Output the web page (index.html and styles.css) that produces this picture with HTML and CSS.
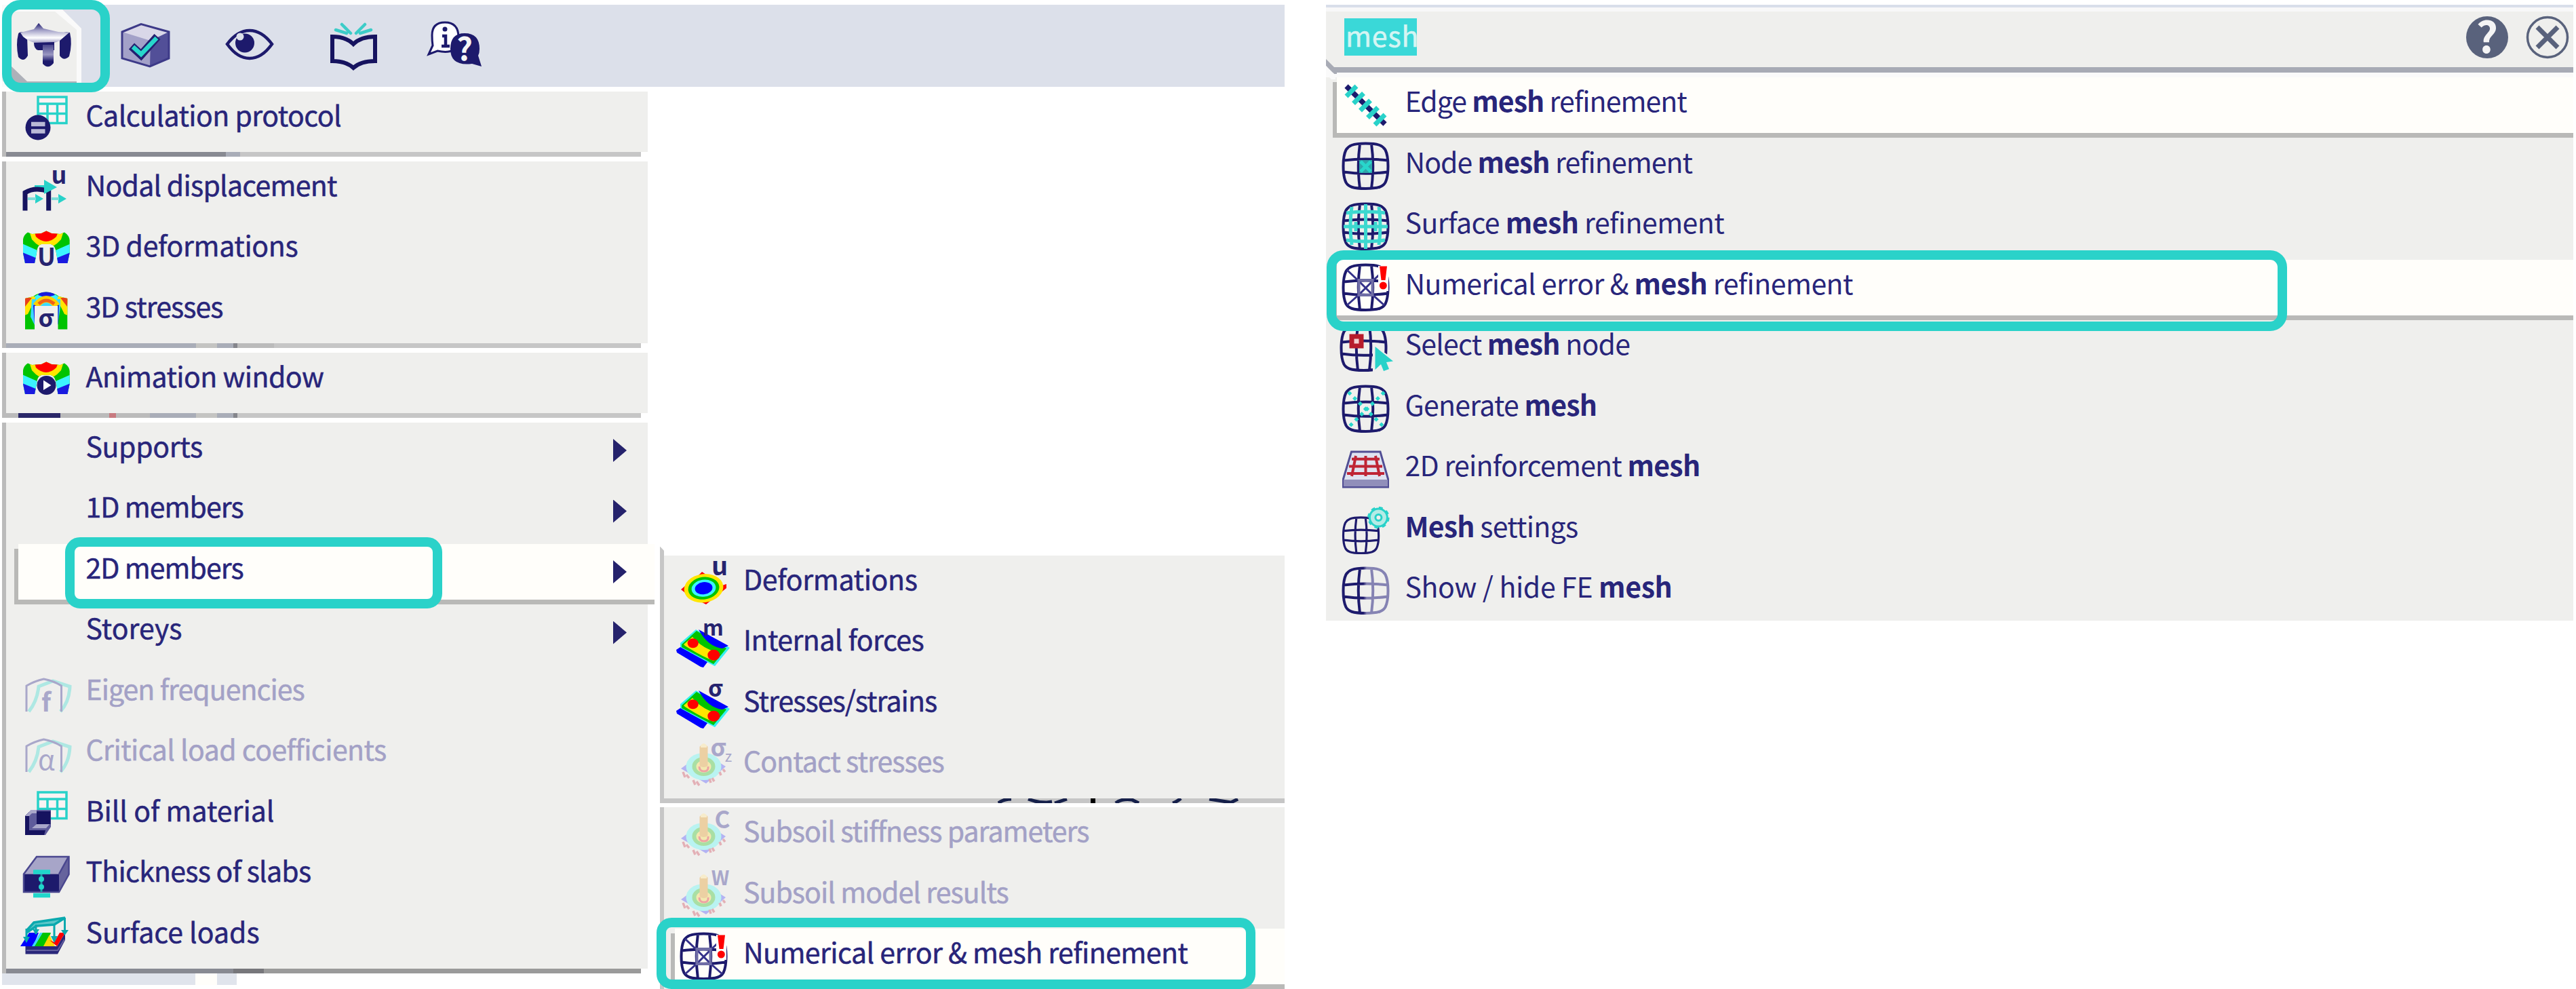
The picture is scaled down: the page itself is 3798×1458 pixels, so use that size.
FILE: index.html
```html
<!DOCTYPE html>
<html lang="en">
<head>
<meta charset="utf-8">
<title>Results menu and mesh search</title>
<link rel="stylesheet" href="styles.css">
</head>
<body>
<svg class="defs" width="0" height="0" aria-hidden="true">
  <defs>
    <linearGradient id="roof" x1="0" y1="0" x2="0" y2="1"><stop offset="0" stop-color="#1d1a6c"/><stop offset=".35" stop-color="#a5a3c9"/><stop offset=".7" stop-color="#fff"/><stop offset="1" stop-color="#8482b4"/></linearGradient>
    <linearGradient id="leg" x1="0" y1="0" x2="0" y2="1"><stop offset="0" stop-color="#4a478c"/><stop offset=".45" stop-color="#9a98c2"/><stop offset=".75" stop-color="#1d1a6c"/></linearGradient>
    <linearGradient id="fade" gradientUnits="userSpaceOnUse" x1="8" y1="0" x2="77" y2="0"><stop offset="0" stop-color="#1d1a6c"/><stop offset=".45" stop-color="#1d1a6c"/><stop offset=".52" stop-color="#8583b3"/><stop offset="1" stop-color="#8583b3"/></linearGradient>
    <clipPath id="arch"><path d="M12 61L9 46V26Q10 19 16 15.500L22 18L36 17L43.300 13.500L51 17L64 18L70 15.500Q77 20 77.700 27V46L74.500 61H60.500L58 46Q56 34 50 33H36Q30 34 29 46L26 61Z"/></clipPath>
    <clipPath id="arch2"><path d="M12 68.500V23L24 20Q32 14 43 13.500Q54 14 62 20L74.300 23V68.500H60.500V34H26V68.500Z"/></clipPath>
    <symbol id="globe" viewBox="0 0 90 89.5" overflow="visible">
      <path d="M42.500 7.500C62 7.500 68 11 71.500 17C74.500 23 75.500 31 75.500 41C75.500 51 74.500 59 71.500 65C68 71 62 74 42.500 74C23 74 17 71 13.500 65C10.500 59 9.500 51 9.500 41C9.500 31 10.500 23 13.500 17C17 11 23 7.500 42.500 7.500ZM34 8Q29.500 40 34 74M51 8Q55.500 40 51 74M10 32.500Q42.500 28.500 75 32.500M10 49.500Q42.500 54 75 49.500" fill="none" stroke="currentColor" stroke-width="4"/>
    </symbol>
    <symbol id="table" viewBox="0 0 90 89.5" overflow="visible">
      <path d="M31 8H73V46.500H31ZM31 18H73M31 32.500H73M45 18V46M59.500 18V46" fill="#faf3f3" stroke="#28d2c9" stroke-width="3.500"/>
    </symbol>
    <symbol id="deform" viewBox="0 0 90 89.5" overflow="visible">
      <g clip-path="url(#arch)"><path d="M5 5H82V70H5Z" fill="#00c400"/><path d="M5 31L30 42V70H5ZM82 31L57 42V70H82Z" fill="#3cf4ff"/><path d="M5 44L30 54V70H5ZM82 44L57 54V70H82Z" fill="#1a1ae0"/><path d="M17 10L22 26Q27 32 34 36H53Q60 32 65 26L70 10Z" fill="#ffe600"/><path d="M25 12L28 22Q43 36 58 22L62 12Z" fill="#f00"/></g>
    </symbol>
    <symbol id="plate" viewBox="0 0 90 89.5" overflow="visible">
      <path d="M8 40L31 20L81 47L59 74L8 48Z" fill="#35f0f0"/><path d="M10 42L32 22L76 48L57 71L10 46Z" fill="#00c400"/><path d="M13 42L26 31Q40 48 66 55L57 66Q40 60 15 44Z" fill="#ffe600"/>
      <path d="M35 20L79 44L70 48Q48 45 35 20Z" fill="#00f"/><path d="M2 50L8 46L48 68L42 76L38 75L3 54Z" fill="#00f"/>
      <ellipse cx="26.700" cy="40.300" rx="8" ry="7" fill="#f00"/><ellipse cx="57.300" cy="57.700" rx="9" ry="8" fill="#f00"/>
    </symbol>
    <symbol id="soil" viewBox="0 0 90 89.5" overflow="visible">
      <path d="M9 46L42 22L75 43L46 68Z" fill="#b3b3f3"/><ellipse cx="42.500" cy="43" rx="26" ry="20" fill="#b9f3f1"/><ellipse cx="42.500" cy="43" rx="17" ry="14" fill="#a9dfa4"/><ellipse cx="42.500" cy="43" rx="11" ry="9" fill="#f3e8b0"/>
      <path d="M36 43Q36 50 43 50Q50 50 49 43" fill="none" stroke="#eda3a3" stroke-width="3"/><path d="M36.500 14Q42.500 6 48.500 14V42Q42.500 46 36.500 42Z" fill="#ecd0a3"/><path d="M38 12Q42.500 6 47 12V15H38Z" fill="#f7eccb"/>
      <path d="M12 51L15 59M17 55L21 60M27 63L30 70M32 65L36 71M53 67L51 61M58 65L55 60M68 56L66 51M74 51L71 47" stroke="#e3b0b6" stroke-width="3.500"/>
    </symbol>
    <symbol id="frame" viewBox="0 0 90 89.5" overflow="visible">
      <path d="M17.500 68Q30 52 32 31L53 23L78 31Q77 54 64 68" fill="none" stroke="#aee8e3" stroke-width="5"/><path d="M14 68V30Q26 23 39.500 20Q55 23 65.500 30V68" fill="none" stroke="#a9a7ca" stroke-width="3"/>
    </symbol>
    <symbol id="error" viewBox="0 0 90 89.5" overflow="visible">
      <use href="#globe"/><path d="M15 15L33 32L52 51L70 67M70 15L52 32L33 51L15 67" stroke="#34318a" stroke-width="3" fill="none"/><path d="M32.500 30H52.500V52H32.500Z" fill="none" stroke="#6f6da5" stroke-width="4"/>
      <path d="M61 9H76V46H61Z" fill="#fffefa"/><path d="M63 9.500H74L71.500 30H65.500Z" fill="#f00"/><circle cx="68.300" cy="38" r="5.500" fill="#f00"/>
    </symbol>
  </defs>
</svg>

<main class="page">
  <section class="app">
    <header class="toolbar">
      <svg class="tool" width="160" height="121" viewBox="3 7 160 121"><path d="M3 7H85L120 42V128H3Z" fill="#fafafa"/><path d="M3 17H81L113 44V120H3Z" fill="#efefed"/><path d="M17 98L40 120H113V123H17Z" fill="#aeb1b9"/>
        <path d="M27 50Q28 46 38 48L40 54L41 82Q35 93 27 84Q23 65 27 50ZM103 48Q92 46 88 53V82Q94 91 102 83Q107 65 103 48Z" fill="#1d1a6c"/><path d="M30 48L50 43L57 34L64 42L86 47L102 48L88 60Q76 66 60 65Q44 63 34 54Z" fill="url(#roof)"/><path d="M50 63L80 62V74H56Q50 72 50 63Z" fill="#1d1a6c"/><path d="M63 66H79V93Q71 103 63 94Z" fill="url(#leg)"/></svg>
      <svg class="tool" width="125" height="121" viewBox="163 7 125 121"><path d="M180 47L208 36L249 47V86L221 98L180 86Z" fill="#a3a1c8"/><path d="M180 47L208 36L249 47L222 60Z" fill="#d9d7e8"/><path d="M222 60L249 47V86L221 98Z" fill="#524f98"/><path d="M180 47L208 35.500L249 47V86L221 98L180 86Z" fill="none" stroke="#3d3a88" stroke-width="3"/><path d="M194 68L208 81L232 54" fill="none" stroke="#232070" stroke-width="12"/><path d="M196 69L208 80L231 56" fill="none" stroke="#28d6cb" stroke-width="6.500"/></svg>
      <svg class="tool" width="155" height="121" viewBox="288 7 155 121"><path d="M335 65Q350 45 368 45Q386 45 401 65Q386 86 368 86Q350 86 335 65Z" fill="none" stroke="#1d1a6c" stroke-width="4.500"/><circle cx="361" cy="63.500" r="14" fill="#1d1a6c"/><circle cx="354" cy="54" r="5.500" fill="#dce0ea"/></svg>
      <svg class="tool" width="155" height="121" viewBox="443 7 155 121"><path d="M490 54Q510 54 521 65Q532 54 553 54V90Q532 90 521 100Q510 90 490 90Z" fill="none" stroke="#16135f" stroke-width="6"/><path d="M495 44L511 49M504 36L517 49M547 44L531 49M538 36L525 49" stroke="#3cccc8" stroke-width="4.500" stroke-linecap="round"/></svg>
      <svg class="tool" width="155" height="121" viewBox="598 7 155 121"><path d="M638 67L632 80L645 75Q676 82 676 55Q676 33 656 33Q637 33 637 52Q637 61 638 67Z" fill="#fff" stroke="#1d1a6c" stroke-width="3"/><path d="M652 53H657V68M651 68H663" stroke="#1d1a6c" stroke-width="4.500" fill="none"/><circle cx="656" cy="43" r="3.500" fill="#1d1a6c"/><path d="M705 82L710 98L696 94Q664 98 664 72Q664 49 685 49Q707 49 707 72Q707 78 705 82Z" fill="#1d1a6c"/><text class="glyph" x="685" y="89" font-size="46" fill="#fff">?</text></svg>
    </header>

    <div class="menus">
      <nav class="menu results">
        <div class="group">
          <div class="row"><svg class="icon" viewBox="0 0 90 89.5"><use href="#table"/><circle cx="31" cy="53" r="18.500" fill="#1d1a6c"/><path d="M21 48H41.500M21 58.500H41.500" stroke="#babad6" stroke-width="6.500"/></svg><span class="snug">Calculation protocol</span></div>
        </div>
        <div class="group">
          <div class="row"><svg class="icon" viewBox="0 0 90 89.5"><path d="M26 38H42" stroke="#28d2c9" stroke-width="6"/><path d="M12 72.500V46Q26 37 46.700 44V72.500" fill="none" stroke="#16135f" stroke-width="7"/><path d="M40 27L59 38L40 48ZM27 48L39 55L27 62ZM61 48L73 55L61 62Z" fill="#28d2c9"/><path d="M16 55H28M51 55H62" stroke="#7fdcd8" stroke-width="4"/><text class="glyph" x="62" y="32.500" font-size="36">u</text></svg><span class="tight">Nodal displacement</span></div>
          <div class="row"><svg class="icon" viewBox="0 0 90 89.5"><use href="#deform"/><text class="glyph" x="43.500" y="64.500" font-size="36">U</text></svg><span class="close">3D deformations</span></div>
          <div class="row"><svg class="icon" viewBox="0 0 90 89.5"><g clip-path="url(#arch2)"><path d="M5 5H82V75H5Z" fill="#00c400"/><path d="M11 20H29L16 46L11 48ZM75 20H57L70 46L75 48Z" fill="#ffe600"/><path d="M10 22H22L12 35ZM76 22H64L74 35Z" fill="#e8401a"/><path d="M22 24H64V36L60 62L56 36H30L26 62L20 50Z" fill="#3cd8ff"/><path d="M24 33L29 31V56L26 62ZM62 33L58 31V56L61 62Z" fill="#1a1ae0"/><path d="M26 20Q43 8 61 20L57 30H30Z" fill="#3cf4ff"/><path d="M31 18L35 12H52L56 18L49 20H37Z" fill="#1a1ae0"/><path d="M28 34Q43 14 59 34" fill="none" stroke="#ffd000" stroke-width="10"/><path d="M32 31Q43 21 55 31" fill="none" stroke="#f06018" stroke-width="5"/></g><text class="glyph" x="43" y="65" font-size="36">σ</text></svg><span class="tightest">3D stresses</span></div>
        </div>
        <div class="group">
          <div class="row"><svg class="icon" viewBox="0 0 90 89.5"><use href="#deform"/><circle cx="43.500" cy="48" r="14" fill="#1d1a6c"/><path d="M39 40.500L50.500 48L39 55Z" fill="#fff"/></svg><span class="snug">Animation window</span></div>
        </div>
        <div class="group">
          <div class="row"><i class="icon"></i><span class="close">Supports</span><i class="arrow"></i></div>
          <div class="row"><i class="icon"></i><span class="tightest">1D members</span><i class="arrow"></i></div>
          <div class="row active"><i class="icon"></i><span class="tightest">2D members</span><i class="arrow"></i></div>
          <div class="row"><i class="icon"></i><span>Storeys</span><i class="arrow"></i></div>
          <div class="row disabled"><svg class="icon" viewBox="0 0 90 89.5"><use href="#frame"/><text class="glyph" x="43" y="68" font-size="38">f</text></svg><span class="tightest">Eigen frequencies</span></div>
          <div class="row disabled"><svg class="icon" viewBox="0 0 90 89.5"><use href="#frame"/><text class="glyph thin" x="43.500" y="64.500" font-size="40">α</text></svg><span class="snug">Critical load coefficients</span></div>
          <div class="row"><svg class="icon" viewBox="0 0 90 89.5"><use href="#table"/><path d="M12 43L21 34H50V59L42 71H12Z" fill="#5e5b9b"/><path d="M12 43L18 37V64H42L40 71H12Z" fill="#16135f"/><path d="M12 43L21 34H29V39H22L18 43Z" fill="#a9a7ca"/><path d="M22 61L30 54H49L43 61Z" fill="#a9a7ca"/><path d="M29 36H49.500V55H29Z" fill="#16135f"/></svg><span>Bill of material</span></div>
          <div class="row"><svg class="icon" viewBox="0 0 90 89.5"><path d="M10 39.500L29 14H76L62 39.500Z" fill="#a7a5c8"/><path d="M62 39.500L76 14V40L62 66Z" fill="#66639d"/><path d="M10 39.500H62V66H10Z" fill="#1d1a6c"/><path d="M10 39.500L29 14H76.500V40L62 66H10ZM62 39.500L76 14" fill="none" stroke="#4a478f" stroke-width="2.500"/><path d="M24 36.500H49M24 71H49" stroke="#20d6cb" stroke-width="6.500"/><path d="M36 40V66" stroke="#1e9ba8" stroke-width="3"/><circle cx="36" cy="47" r="4" fill="#20d6cb"/><circle cx="36" cy="58.500" r="4" fill="#20d6cb"/></svg><span class="tight">Thickness of slabs</span></div>
          <div class="row"><svg class="icon" viewBox="0 0 90 89.5"><path d="M12.500 56H59L71 36V47L60 67.500H12.500Z" fill="#2a277a"/><path d="M14 62H60L70 46" fill="none" stroke="#625f9f" stroke-width="2"/><path d="M5 56L18 36H32L24 56Z" fill="#00f"/><path d="M22 56L34 36H40L28 56Z" fill="#3cd8ff"/><path d="M26 56L38 36H50L42 56Z" fill="#00c400"/><path d="M39 56L48 39L56 56Z" fill="#ffd800"/><path d="M48 47L59 56L71 36H63L55 50Z" fill="#f00"/><path d="M14 33L25 21L71 14L55 24L29 26L14 36" fill="#5cc7c9" stroke="#0aa9ae" stroke-width="3.500"/><path d="M14 30V48M28 24V38M55 24V47M70.500 14V36" stroke="#0aa9ae" stroke-width="3"/><path d="M9 42H19L14 51ZM50 41H60L55 51ZM65 32H76L70.500 40ZM23 31H33L28 39Z" fill="#0aa9ae"/></svg><span>Surface loads</span></div>
        </div>
        <div class="residue"><i></i><i></i><i></i></div>
      </nav>

      <nav class="menu submenu">
        <div class="group first">
          <div class="row"><svg class="icon" viewBox="0 0 90 89.5"><path d="M9 50L16 44L34 30L40 24L46 28L70 44L76 42V48L56 64L46 72L38 68L14 54Z" fill="#f00"/><g transform="rotate(-8 42.500 48)"><ellipse cx="42.500" cy="48.200" rx="29" ry="21" fill="#ffe600"/><ellipse cx="42.500" cy="48.200" rx="23" ry="16.500" fill="#00c400"/><ellipse cx="42.500" cy="48.200" rx="18" ry="12.500" fill="#3cf4ff"/><ellipse cx="42.500" cy="48.200" rx="13" ry="9" fill="#00f"/></g><text class="glyph" x="66" y="29" font-size="38">u</text></svg><span class="close">Deformations</span></div>
          <div class="row"><svg class="icon" viewBox="0 0 90 89.5"><use href="#plate"/><text class="glyph" x="56.500" y="28.500" font-size="32">m</text></svg><span class="snug">Internal forces</span></div>
          <div class="row"><svg class="icon" viewBox="0 0 90 89.5"><use href="#plate"/><text class="glyph" x="60" y="29" font-size="34">σ</text></svg><span class="tightest">Stresses/strains</span></div>
          <div class="row disabled"><svg class="icon" viewBox="0 0 90 89.5"><use href="#soil"/><text class="glyph" x="64" y="28" font-size="36">σ</text><text class="glyph thin" x="79" y="36" font-size="22">z</text></svg><span class="tightest">Contact stresses</span></div>
          <svg class="remnant" width="370" height="7" viewBox="0 0 370 7"><path d="M1 7Q8 1 20 1M174 7Q182 0 198 2L208 7M258 7Q264 5 270 0M45 1Q58 6 72 6L80 5M84 7L102 1M312 1L344 6L354 1" fill="none" stroke="#16204a" stroke-width="5"/><path d="M137 0H144V7H137Z"/></svg>
        </div>
        <div class="group">
          <div class="row disabled"><svg class="icon" viewBox="0 0 90 89.5"><use href="#soil"/><text class="glyph" x="70" y="30.500" font-size="35">C</text></svg><span class="tightest">Subsoil stiffness parameters</span></div>
          <div class="row disabled"><svg class="icon" viewBox="0 0 90 89.5"><use href="#soil"/><text class="glyph" x="67" y="25" font-size="29">W</text></svg><span class="tightest">Subsoil model results</span></div>
          <div class="row active"><svg class="icon" viewBox="0 0 90 89.5"><use href="#error"/></svg><span class="snug">Numerical error &amp; mesh refinement</span></div>
        </div>
      </nav>
    </div>
  </section>

  <section class="search">
    <header class="field">
      <span class="query">mesh</span>
      <svg class="actions" width="170" height="90" viewBox="3624 10 170 90"><circle cx="3667" cy="55" r="31" fill="#59627c"/><text class="glyph" x="3667" y="78" font-size="63" fill="#efefed">?</text><circle cx="3756" cy="55" r="29.500" fill="none" stroke="#59627c" stroke-width="3.500"/><path d="M3741 40L3771 70M3771 40L3741 70" stroke="#59627c" stroke-width="7"/></svg>
      <svg class="corner" width="20" height="36" viewBox="0 0 20 36"><path d="M0 12V2L16 18V24H12Z" fill="#a8abb5"/><path d="M0 12L14 26V32H8L0 24Z" fill="#fafafa"/></svg>
    </header>
    <div class="row active"><svg class="icon" viewBox="0 0 90 89.5"><path d="M14 13L71 69" stroke="#1d1a6c" stroke-width="7.500"/><path d="M14 28L29 13M24.500 38.500L39.500 23.500M34.500 49L49.500 34M45.500 59.500L60.500 44.500M56 70L71 55" stroke="#28d2c9" stroke-width="7"/></svg><span class="tightest">Edge <b>mesh</b> refinement</span></div>
    <div class="row"><svg class="icon" viewBox="0 0 90 89.5"><use href="#globe"/><path d="M33 32H52V51H33Z" fill="#2fa5a9"/><path d="M35 34L50 49M50 34L35 49" stroke="#28d6cb" stroke-width="5"/></svg><span class="tightest">Node <b>mesh</b> refinement</span></div>
    <div class="row"><svg class="icon" viewBox="0 0 90 89.5"><use href="#globe"/><path d="M22 12Q18 40 22 68M42.500 8V74M62 12Q66 40 62 68M14 21Q42.500 17 71 21M10 41H75M14 61Q42.500 65 71 61M28 34V48M57 34V48" fill="none" stroke="#3dd8cf" stroke-width="5"/></svg><span class="snug">Surface <b>mesh</b> refinement</span></div>
    <div class="row active"><svg class="icon" viewBox="0 0 90 89.5"><use href="#error"/></svg><span class="snug">Numerical error &amp; <b>mesh</b> refinement</span></div>
    <div class="row"><svg class="icon" viewBox="0 0 90 89.5"><use href="#globe" x="-3"/><path d="M53 36L78 53V80H53Z" fill="#efefed"/><path d="M18.500 20.500H39.500V41.500H18.500Z" fill="#b71c2c"/><path d="M25.500 27.500H32.500V34.500H25.500Z" fill="#f3cfcf"/><path d="M56.500 39L83 60.500L73 62L77 72L69 75L65 65L56.500 73Z" fill="#28d2c9"/></svg><span class="tight">Select <b>mesh</b> node</span></div>
    <div class="row"><svg class="icon" viewBox="0 0 90 89.5"><use href="#globe"/><path d="M17 16L70 68M70 16L17 68" stroke="#28d6cb" stroke-width="5" stroke-dasharray="5 6"/></svg><span class="tight">Generate <b>mesh</b></span></div>
    <div class="row"><svg class="icon" viewBox="0 0 90 89.5"><path d="M21.500 15H64L75.500 55V67H9.500V55Z" fill="#dfe3f0" stroke="#514e94" stroke-width="3"/><path d="M10 56H75V66H10Z" fill="#918fba"/><path d="M22 25.700H63M18 36.500H67M15 47H70M28 21L22 51M42.500 21V51M57 21L63 51" stroke="#bf2434" stroke-width="4"/></svg><span class="tight">2D reinforcement <b>mesh</b></span></div>
    <div class="row"><svg class="icon" viewBox="0 0 90 89.5"><g transform="translate(2 16) scale(.79)"><use href="#globe"/></g><circle cx="61.400" cy="22" r="13" fill="#b5ebe6" stroke="#28d2c9" stroke-width="3"/><circle cx="61.400" cy="22" r="14.500" fill="none" stroke="#28d2c9" stroke-width="3.500" stroke-dasharray="5.700 5.700"/><circle cx="61.400" cy="22" r="4.500" fill="#efefed" stroke="#28d2c9" stroke-width="3"/></svg><span class="tight"><b>Mesh</b> settings</span></div>
    <div class="row"><svg class="icon" viewBox="0 0 90 89.5"><path d="M42.500 7.500C62 7.500 68 11 71.500 17C74.500 23 75.500 31 75.500 41C75.500 51 74.500 59 71.500 65C68 71 62 74 42.500 74C23 74 17 71 13.500 65C10.500 59 9.500 51 9.500 41C9.500 31 10.500 23 13.500 17C17 11 23 7.500 42.500 7.500ZM34 8Q29.500 40 34 74M51 8Q55.500 40 51 74M10 32.500Q42.500 28.500 75 32.500M10 49.500Q42.500 54 75 49.500" fill="none" stroke="url(#fade)" stroke-width="4"/></svg><span class="close">Show / hide FE <b>mesh</b></span></div>
  </section>

  <div class="mark mark-tab"></div>
  <div class="mark mark-members"></div>
  <div class="mark mark-error"></div>
  <div class="mark mark-result"></div>
</main>
</body>
</html>
```
FILE: styles.css
```css
* { box-sizing: border-box; }

body {
  margin: 0;
  background: #fff;
  color: #28257a;
  font-family: "Noto Sans CJK SC", "Noto Sans", sans-serif;
  font-size: 41px;
}

svg { display: block; overflow: visible; }
.defs { position: absolute; }

.page {
  position: relative;
  display: flex;
  gap: 61px;
  width: 3798px;
  height: 1458px;
}

.app { width: 1894px; padding: 7px 0 0 3px; }

.toolbar {
  display: flex;
  width: 1891px;
  height: 121px;
  background: #dce0ea;
}

.tool { overflow: hidden; }

.menus { display: flex; align-items: flex-start; }

.menu { display: flex; flex-direction: column; gap: 6.5px; -webkit-text-stroke: .5px; }

.group { background: #efefed; }

.results { width: 952px; margin-top: 6.5px; --edge: 12px; }

.results .group {
  border-left: 6px solid #bbb;
  background-clip: padding-box;
}

/* shadow under each block of commands */
.results .group::after {
  content: "";
  display: block;
  width: 936px;
  height: 7px;
  background: #c6c6c6;
  box-shadow: 10px 0 #fff;
}
.results .group:first-child::after { background: linear-gradient(90deg, #888a92 324px, #a9adb8 324px 345px, #c6c6c6 345px); }
.results .group:nth-child(2)::after { background: linear-gradient(90deg, #a9adb8 280px, #c4c4c2 280px 311px, #a9adb8 311px 335px, #85868c 335px 341px, #bbb 341px 395px, #c6c6c6 395px); }
.results .group:nth-child(3)::after { background: linear-gradient(90deg, #bbb 18px, #2a2768 18px 80px, #bbb 80px 152px, #c87a80 152px 162px, #bbb 162px 212px, #a9adb8 212px 280px, #c4c4c2 280px 311px, #a9adb8 311px 335px, #85868c 335px 341px, #c6c6c6 341px); }
.results .group:nth-child(4)::after { background: linear-gradient(90deg, #888a92 335px, #77777b 335px 380px, #9a9a9a 380px); }

.residue { display: flex; height: 17px; margin-top: -6.5px; }
.residue i { width: 285px; background: #e0e4ec; }
.residue i:nth-child(2) { width: 32px; background: #fffefa; }
.residue i:nth-child(3) { width: 29px; }

.row {
  display: flex;
  gap: 11.5px;
  height: 89.5px;
  padding-left: 16px;
  line-height: 67px;
  white-space: nowrap;
}

.row.active {
  --ivory-edge: calc(var(--edge) + 6px);
  background:
    linear-gradient(#b9b9b7, #b9b9b7) var(--edge) 82px / 100% 7px no-repeat,
    linear-gradient(#b9b9b7, #b9b9b7) var(--edge) 7px / 6px 82px no-repeat,
    linear-gradient(#fffefa, #fffefa) var(--ivory-edge) 0 / 100% 82px no-repeat;
}
.results .row.active { margin-right: -10px; }
.results .row.active .arrow { margin-right: 41px; }

/* tracking steps that follow the widths of the native hinted labels */
.close { letter-spacing: -.35px; }
.snug { letter-spacing: -.55px; }
.tight { letter-spacing: -.75px; }
.tightest { letter-spacing: -.95px; }

.icon { flex: none; width: 90px; height: 89.5px; color: #1d1a6c; -webkit-text-stroke: 0; }

.glyph { fill: #26236f; font-weight: 700; text-anchor: middle; }
.glyph.thin { font-weight: 400; }
.glyph[fill] { fill: #f5f5f5; }

.disabled { color: #a3a1c6; }
.disabled .glyph { fill: #a9a7ca; }

.arrow {
  margin: 24.5px 31px 0 auto;
  width: 20px;
  height: 34px;
  background: #25226c;
  clip-path: polygon(0 0, 100% 50%, 0 100%);
}

.submenu { width: 921px; margin: 690.5px 0 0 18px; --edge: 10px; }
.submenu .group { border-left: 6px solid #c6c6c6; }
.submenu .row { gap: 11px; }
.submenu .first {
  position: relative;
  border-bottom: 7px solid #c6c6c6;
}
.submenu .first::before {
  content: "";
  position: absolute;
  left: -6px;
  top: -13px;
  width: 10px;
  height: 14px;
  background: #c6c6c6;
  clip-path: polygon(0 0, 60% 45%, 60% 100%, 0 100%);
}
.remnant { position: absolute; left: 492px; bottom: -7px; overflow: hidden; }

.search { width: 1839px; height: 915px; padding-top: 7px; background: #efefed content-box; --edge: 10px; }
.search .row { gap: 10.5px; }

.field {
  position: relative;
  display: flex;
  justify-content: space-between;
  height: 107px;
  padding: 3px 0 0 27px;
  background: linear-gradient(#d9deea 4px, #f8f8f8 4px 10px, #efefed 10px 92px, #a8abb5 92px 100px, #fafafa 100px);
}
.query {
  height: 55px;
  margin-top: 17px;
  padding-left: 2px;
  width: 107px;
  background: #3ad8d8;
  color: #d4f5f3;
  letter-spacing: .9px;
  line-height: 48px;
  -webkit-text-stroke: .6px;
}
.corner { position: absolute; left: 0; bottom: -7px; }

/* callout frames laid over the menus */
.mark { position: absolute; border: 14px solid #2ad2c9; border-radius: 27px; }
.mark-tab { left: 3px; top: 0; width: 159px; height: 136px; }
.mark-members { left: 96px; top: 792px; width: 556px; height: 105px; border-radius: 22px; }
.mark-error { left: 968px; top: 1353px; width: 883px; height: 105px; border-radius: 22px; }
.mark-result { left: 1956px; top: 369px; width: 1416px; height: 119px; border-radius: 25px; }
```
